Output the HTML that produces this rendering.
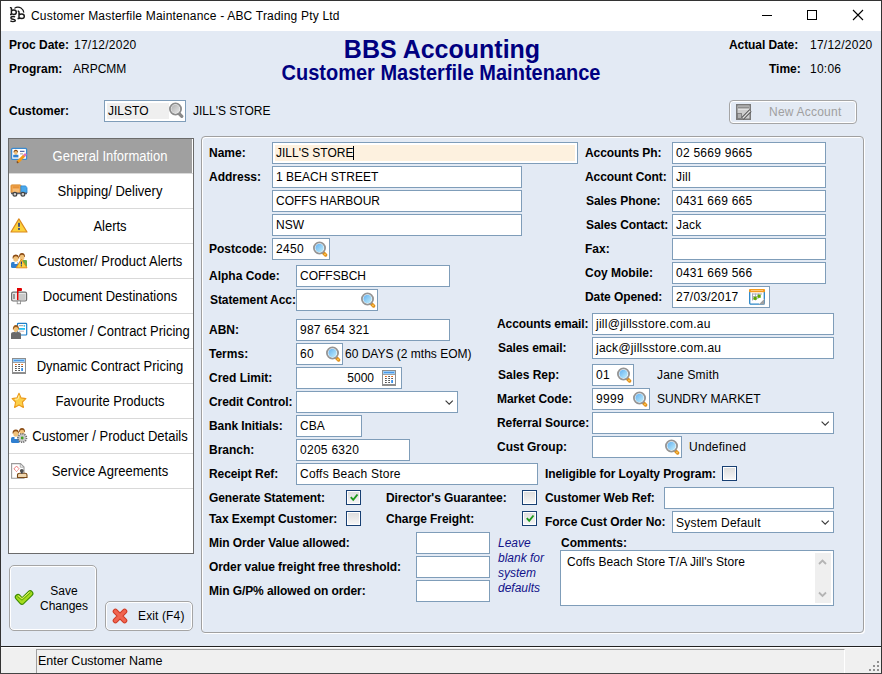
<!DOCTYPE html><html><head><meta charset="utf-8"><style>
html,body{margin:0;padding:0}
body{width:882px;height:674px;position:relative;overflow:hidden;background:#E3EAF4;font-family:"Liberation Sans", sans-serif;color:#000}
.a{position:absolute}
svg{display:block}
.t{position:absolute;white-space:nowrap}
.inp{position:absolute;box-sizing:border-box;border:1px solid #7F9DB9}
.cb{position:absolute;box-sizing:border-box;width:15px;height:15px;border:1px solid #173f72;background:linear-gradient(#dcdcdc,#f7f7f7);box-shadow:inset 0 0 0 1px #fff}
.side{position:absolute;left:9px;width:184px;height:34px;border-bottom:1px solid #d9d9d9}
</style></head><body>
<div class="a" style="left:0px;top:0px;width:882px;height:31px;background:#fff"></div>
<div class="a" style="left:0px;top:0px;width:882px;height:1px;background:#333"></div>
<div class="a" style="left:0px;top:0px;width:1px;height:674px;background:#333"></div>
<div class="a" style="left:881px;top:0px;width:1px;height:674px;background:#333"></div>
<div class="a" style="left:0px;top:0px;width:30px;height:30px"><svg width="30" height="30" viewBox="0 0 30 30" fill="none" stroke="#1a1a1a" stroke-width="1.45"><path d="M11.4 7.6 V14.5 M9.9 7.6 H11.4 M10 14.5 H11.8 M11.4 11 Q12.3 10 14 10 Q16.3 10 16.3 12.3 Q16.3 14.5 14 14.5 Q12.3 14.5 11.4 13.6"/><path d="M15.1 17 Q14.4 16.5 13 16.5 Q10.9 16.5 10.9 17.9 Q10.9 19 13 19.2 Q15.3 19.5 15.3 20.6 Q15.3 21.6 13 21.6 Q11.2 21.6 10.4 20.8"/><path d="M19 11.2 V18.5 M17.7 11.2 H19 M17.5 18.5 H19.3 M19 15 Q20 13.9 21.8 13.9 Q24.3 13.9 24.3 16.2 Q24.3 18.5 21.8 18.5 Q20 18.5 19 17.6"/><path d="M14.4 8.4 Q17.5 6 21 8 Q23.2 9.6 23.9 12.6" stroke-width="1.1"/></svg></div>
<div class="t" style="left:31px;top:10px;font-size:12px;line-height:12px;letter-spacing:0.2px;">Customer Masterfile Maintenance - ABC Trading Pty Ltd</div>
<div class="a" style="left:762px;top:15px;width:10px;height:1px;background:#000"></div>
<div class="a" style="left:807px;top:10px;width:10px;height:10px;box-sizing:border-box;border:1px solid #000"></div>
<div class="a" style="left:852px;top:9px;width:12px;height:12px"><svg width="12" height="12" viewBox="0 0 12 12"><path d="M1 1 L11 11 M11 1 L1 11" stroke="#000" stroke-width="1.1"/></svg></div>
<div class="t" style="left:9px;top:39px;font-size:12px;line-height:12px;font-weight:bold;">Proc Date:</div>
<div class="t" style="left:74px;top:39px;font-size:12px;line-height:12px;letter-spacing:0.24px;">17/12/2020</div>
<div class="t" style="left:9px;top:63px;font-size:12px;line-height:12px;font-weight:bold;">Program:</div>
<div class="t" style="left:73px;top:63px;font-size:12px;line-height:12px;">ARPCMM</div>
<div class="t" style="left:142px;width:600px;text-align:center;top:37px;font-size:25px;line-height:25px;font-weight:bold;color:#000080;">BBS Accounting</div>
<div class="t" style="left:141px;width:600px;text-align:center;top:62px;font-size:20px;line-height:20px;font-weight:bold;color:#000080;transform:scaleY(1.065);transform-origin:0 3px;">Customer Masterfile Maintenance</div>
<div class="t" style="left:729px;top:39px;font-size:12px;line-height:12px;font-weight:bold;letter-spacing:-0.08px;">Actual Date:</div>
<div class="t" style="left:810px;top:39px;font-size:12px;line-height:12px;letter-spacing:0.24px;">17/12/2020</div>
<div class="t" style="left:769px;top:63px;font-size:12px;line-height:12px;font-weight:bold;">Time:</div>
<div class="t" style="left:810px;top:63px;font-size:12px;line-height:12px;letter-spacing:0.24px;">10:06</div>
<div class="t" style="left:9px;top:105px;font-size:12px;line-height:12px;font-weight:bold;">Customer:</div>
<div class="inp" style="left:104px;top:100px;width:82px;height:22px;background:#fff"></div>
<div class="a" style="left:107px;top:103px;width:62px;height:16px;background:#efefef"></div>
<div class="a" style="left:168px;top:102px;width:16px;height:16px"><svg width="16" height="16" viewBox="0 0 16 16"><defs><linearGradient id="mgg" x1="0" y1="0" x2="1" y2="1"><stop offset="0" stop-color="#b0b0b0"/><stop offset="1" stop-color="#e8e8e8"/></linearGradient></defs><path d="M11 11.5 L13.8 14.3" stroke="#8a8a8a" stroke-width="3.2" stroke-linecap="round"/><circle cx="7.5" cy="7" r="5.6" fill="#fff" stroke="#8c8c8c" stroke-width="1.8"/><circle cx="7.5" cy="7" r="4.3" fill="url(#mgg)"/></svg></div>
<div class="t" style="left:108px;top:105px;font-size:12px;line-height:12px;">JILSTO</div>
<div class="t" style="left:193px;top:105px;font-size:12px;line-height:12px;">JILL'S STORE</div>
<div class="a" style="left:729px;top:100px;width:128px;height:24px;box-sizing:border-box;border:1px solid #a5a5a5;border-radius:4px;box-shadow:inset 0 0 0 1px #fff"></div>
<div class="a" style="left:736px;top:104px;width:16px;height:16px"><svg width="16" height="16" viewBox="0 0 16 16"><rect x="0.75" y="0.75" width="13.5" height="14.5" fill="#cdcdcd" stroke="#7a7a7a" stroke-width="1.5"/><rect x="2" y="2.5" width="11" height="1.8" fill="#8e8e8e"/><rect x="2" y="5" width="11" height="0.8" fill="#e6e6e6"/><rect x="1.5" y="9.5" width="4" height="5" fill="#b0b0b0" stroke="#777" stroke-width="0.8"/><path d="M6.5 14.5 L14.5 6.5" stroke="#555" stroke-width="3.2"/><path d="M6.8 14.2 L14.2 6.8" stroke="#e0e0e0" stroke-width="1.3"/></svg></div>
<div class="t" style="left:769px;top:106px;font-size:12px;line-height:12px;color:#a0a0a0;letter-spacing:0.22px;">New Account</div>
<div class="a" style="left:8px;top:138px;width:186px;height:416px;box-sizing:border-box;border:1px solid #6b6b6b;background:#fff"></div>
<div class="a" style="left:9px;top:139px;width:183px;height:34px;background:#a0a0a0"></div>
<div class="t" style="left:-190px;width:600px;text-align:center;top:150px;font-size:13px;line-height:13px;color:#ffffff;transform:scaleY(1.1);transform-origin:0 11px;">General Information</div>
<div class="a" style="left:9px;top:173px;width:184px;height:1px;background:#d9d9d9"></div>
<div class="t" style="left:-190px;width:600px;text-align:center;top:185px;font-size:13px;line-height:13px;transform:scaleY(1.1);transform-origin:0 11px;">Shipping/ Delivery</div>
<div class="a" style="left:9px;top:208px;width:184px;height:1px;background:#d9d9d9"></div>
<div class="t" style="left:-190px;width:600px;text-align:center;top:220px;font-size:13px;line-height:13px;transform:scaleY(1.1);transform-origin:0 11px;">Alerts</div>
<div class="a" style="left:9px;top:243px;width:184px;height:1px;background:#d9d9d9"></div>
<div class="t" style="left:-190px;width:600px;text-align:center;top:255px;font-size:13px;line-height:13px;transform:scaleY(1.1);transform-origin:0 11px;">Customer/ Product Alerts</div>
<div class="a" style="left:9px;top:278px;width:184px;height:1px;background:#d9d9d9"></div>
<div class="t" style="left:-190px;width:600px;text-align:center;top:290px;font-size:13px;line-height:13px;transform:scaleY(1.1);transform-origin:0 11px;">Document Destinations</div>
<div class="a" style="left:9px;top:313px;width:184px;height:1px;background:#d9d9d9"></div>
<div class="t" style="left:-190px;width:600px;text-align:center;top:325px;font-size:13px;line-height:13px;transform:scaleY(1.1);transform-origin:0 11px;">Customer / Contract Pricing</div>
<div class="a" style="left:9px;top:348px;width:184px;height:1px;background:#d9d9d9"></div>
<div class="t" style="left:-190px;width:600px;text-align:center;top:360px;font-size:13px;line-height:13px;transform:scaleY(1.1);transform-origin:0 11px;">Dynamic Contract Pricing</div>
<div class="a" style="left:9px;top:383px;width:184px;height:1px;background:#d9d9d9"></div>
<div class="t" style="left:-190px;width:600px;text-align:center;top:395px;font-size:13px;line-height:13px;transform:scaleY(1.1);transform-origin:0 11px;">Favourite Products</div>
<div class="a" style="left:9px;top:418px;width:184px;height:1px;background:#d9d9d9"></div>
<div class="t" style="left:-190px;width:600px;text-align:center;top:430px;font-size:13px;line-height:13px;transform:scaleY(1.1);transform-origin:0 11px;">Customer / Product Details</div>
<div class="a" style="left:9px;top:453px;width:184px;height:1px;background:#d9d9d9"></div>
<div class="t" style="left:-190px;width:600px;text-align:center;top:465px;font-size:13px;line-height:13px;transform:scaleY(1.1);transform-origin:0 11px;">Service Agreements</div>
<div class="a" style="left:9px;top:488px;width:184px;height:1px;background:#d9d9d9"></div>
<div class="a" style="left:9px;top:145px;width:22px;height:22px"><svg width="22" height="22" viewBox="0 0 22 22"><rect x="2.6" y="3.4" width="15" height="11" rx="1" fill="#fff" stroke="#3a8ad0" stroke-width="1.3"/><path d="M4.5 7.5 Q4.5 4.8 6.8 4.8 Q9 4.8 9 7.5 Z" fill="#8a4a12"/><ellipse cx="6.8" cy="8" rx="1.7" ry="2" fill="#f1c27a"/><rect x="4.2" y="9.8" width="5.2" height="2.6" fill="#2f7fd0"/><rect x="11" y="5.8" width="4.5" height="1" fill="#2a4a9a"/><rect x="11" y="8.5" width="3" height="0.8" fill="#888"/><path d="M8.8 17 L15.3 10.5" stroke="#f29a1a" stroke-width="3"/><path d="M15 10.8 L17 8.8" stroke="#e070c0" stroke-width="2.6"/><path d="M8 17.8 L9 16.8" stroke="#7a4a20" stroke-width="2"/></svg></div>
<div class="a" style="left:9px;top:180px;width:22px;height:22px"><svg width="22" height="22" viewBox="0 0 22 22"><rect x="2" y="4.9" width="9.9" height="8.2" rx="0.8" fill="#f2a650" stroke="#d68420" stroke-width="0.9"/><rect x="3.8" y="6.5" width="6.4" height="1.2" fill="#e08a30"/><rect x="3.8" y="8.8" width="6.4" height="3.5" fill="#f6bb74"/><path d="M11.9 5.9 H16.6 L18 7.8 V13 H11.9 Z" fill="#48a8ec" stroke="#2a86d0" stroke-width="0.8"/><rect x="2" y="12.6" width="16" height="1.6" fill="#5a6070"/><circle cx="5.9" cy="14.2" r="1.9" fill="#d0d0d0" stroke="#444" stroke-width="1.2"/><circle cx="13.9" cy="14.2" r="1.9" fill="#d0d0d0" stroke="#444" stroke-width="1.2"/></svg></div>
<div class="a" style="left:9px;top:215px;width:22px;height:22px"><svg width="22" height="22" viewBox="0 0 22 22"><path d="M9.9 3.9 L18 17 H2 Z" fill="#fcd23c" stroke="#dc8a1c" stroke-width="1.2" stroke-linejoin="round"/><rect x="9.2" y="7.8" width="1.6" height="4" fill="#1f3a8a"/><rect x="9.2" y="13" width="1.6" height="1.9" fill="#1f3a8a"/></svg></div>
<div class="a" style="left:9px;top:250px;width:22px;height:22px"><svg width="22" height="22" viewBox="0 0 22 22"><path d="M10 7 Q10 3 13 3 Q16 3 16 7 Z" fill="#8a4a12"/><ellipse cx="13" cy="7.5" rx="2.4" ry="2.7" fill="#f1c27a"/><rect x="13.5" y="10" width="4.5" height="7" rx="1" fill="#6ab04a"/><path d="M3.5 8.5 Q3.5 4.5 6.8 4.5 Q10 4.5 10 8.5 Z" fill="#8a4a12"/><ellipse cx="6.8" cy="9" rx="2.5" ry="2.8" fill="#f1c27a"/><rect x="2" y="12" width="7.5" height="6" rx="1.5" fill="#2f7fd0"/><rect x="5.5" y="12" width="3" height="2" fill="#fff"/><path d="M12.4 9.2 L18 17.8 H7.2 Z" fill="#fcd23c" stroke="#e08a1c" stroke-width="1" stroke-linejoin="round"/><rect x="11.8" y="11.5" width="1.2" height="3" fill="#1f3a8a"/><rect x="11.8" y="15.2" width="1.2" height="1.2" fill="#1f3a8a"/></svg></div>
<div class="a" style="left:9px;top:285px;width:22px;height:22px"><svg width="22" height="22" viewBox="0 0 22 22"><rect x="2.6" y="7.2" width="15" height="8.8" rx="1.5" fill="#e6e6e6" stroke="#707070" stroke-width="1.2"/><rect x="4" y="9" width="2" height="5" fill="#9a9a9a"/><rect x="10" y="9" width="6.5" height="6" fill="#c8c8c8"/><rect x="8.2" y="16" width="3.4" height="2.8" fill="#fff" stroke="#888" stroke-width="0.8"/><rect x="8" y="3" width="1.5" height="12" fill="#e00000"/><rect x="8" y="3" width="5" height="3" rx="1" fill="#e00000"/></svg></div>
<div class="a" style="left:9px;top:320px;width:22px;height:22px"><svg width="22" height="22" viewBox="0 0 22 22"><rect x="8.5" y="3.4" width="9.2" height="11.6" rx="0.8" fill="#fff" stroke="#1f7fc8" stroke-width="1.2"/><rect x="10" y="5.2" width="4" height="1" fill="#999"/><circle cx="15.3" cy="5.8" r="0.9" fill="#20b8f0"/><rect x="10" y="8" width="6" height="1.8" fill="#20c0f0"/><rect x="10" y="10.8" width="5" height="0.7" fill="#c0a0a0"/><path d="M3.8 9.5 Q3.8 5 7 5 Q10 5 10 9.5 Z" fill="#9a5a18"/><ellipse cx="7" cy="9.5" rx="2.3" ry="2.6" fill="#f1c27a"/><path d="M2 19 V14 Q2 12 5 12 H9 Q12 12 12 14 V19 Z" fill="#6a6a6a"/><path d="M6 12 L7 15 L8 12 Z" fill="#fff"/><rect x="6.5" y="12" width="1" height="2.5" fill="#222"/></svg></div>
<div class="a" style="left:9px;top:355px;width:22px;height:22px"><svg width="22" height="22" viewBox="0 0 22 22"><rect x="3.5" y="3.5" width="13" height="15" fill="#fff" stroke="#8e8e8e" stroke-width="1"/><rect x="3" y="17" width="14" height="2" fill="#8e8e8e"/><rect x="4" y="4" width="12" height="3.2" fill="#98ccf8"/><rect x="5" y="5.2" width="10" height="0.8" fill="#3a8ae0"/><rect x="3.5" y="7.2" width="13" height="0.8" fill="#8e8e8e"/><g fill="#555"><rect x="9.2" y="9" width="1.8" height="1"/><rect x="6" y="11" width="1.8" height="1"/><rect x="9.2" y="11" width="1.8" height="1"/><rect x="12.2" y="11" width="1.8" height="1"/><rect x="6" y="13" width="1.8" height="1"/><rect x="9.2" y="13" width="1.8" height="1"/><rect x="6" y="15" width="1.8" height="1"/><rect x="9.2" y="15" width="1.8" height="1"/></g><rect x="6" y="9" width="1.8" height="1" fill="#f06a10"/><rect x="12.2" y="9" width="1.8" height="1" fill="#f06a10"/><rect x="12.2" y="13" width="1.8" height="3" fill="#3a90e8"/></svg></div>
<div class="a" style="left:9px;top:390px;width:22px;height:22px"><svg width="22" height="22" viewBox="0 0 22 22"><path d="M10 3.3 L12.1 7.9 L16.9 8.6 L13.4 12 L14.4 17.4 L10 14.9 L5.6 17.4 L6.6 12 L3.1 8.6 L7.9 7.9 Z" fill="#fcd04a" stroke="#eb9a1a" stroke-width="1.1" stroke-linejoin="round"/><path d="M6 9.3 L9 9 L10 5.5" fill="none" stroke="#fff6c0" stroke-width="0.8"/></svg></div>
<div class="a" style="left:9px;top:425px;width:22px;height:22px"><svg width="22" height="22" viewBox="0 0 22 22"><path d="M10 7 Q10 3 13 3 Q16 3 16 7 Z" fill="#8a4a12"/><ellipse cx="13" cy="7.5" rx="2.4" ry="2.7" fill="#f1c27a"/><path d="M3.5 8.5 Q3.5 4.5 6.8 4.5 Q10 4.5 10 8.5 Z" fill="#8a4a12"/><ellipse cx="6.8" cy="9" rx="2.5" ry="2.8" fill="#f1c27a"/><rect x="2" y="12" width="8.5" height="6" rx="1.5" fill="#2f7fd0"/><rect x="5.5" y="12" width="3" height="2" fill="#fff"/><circle cx="13.2" cy="13" r="4.3" fill="#c8c8c8" stroke="#707070" stroke-width="1.6" stroke-dasharray="1.2 1"/><circle cx="13.2" cy="13" r="1.4" fill="#40a020"/></svg></div>
<div class="a" style="left:9px;top:460px;width:22px;height:22px"><svg width="22" height="22" viewBox="0 0 22 22"><path d="M2.6 3.6 H11.5 L15 7 V18.2 H2.6 Z" fill="#fff" stroke="#9a9a9a" stroke-width="1.1"/><path d="M11.3 3.8 V7.2 H14.8" fill="none" stroke="#9a9a9a" stroke-width="0.8"/><path d="M7.5 6 L10 8.8 L7.5 11.6 L5 8.8 Z" fill="none" stroke="#e02020" stroke-width="0.9" stroke-dasharray="0.9 0.7"/><path d="M8.5 17.5 V15 Q8.5 13.2 11 13.2 H16 Q18 13.2 18 15 V17.5 Z" fill="#f0d8b0" stroke="#7a4a18" stroke-width="1.1"/><rect x="12" y="10.5" width="1.6" height="3" fill="#2a3a5a"/><circle cx="12.8" cy="10.8" r="1.9" fill="#505050"/></svg></div>
<div class="a" style="left:9px;top:565px;width:88px;height:66px;box-sizing:border-box;border:1px solid #a5a5a5;border-radius:5px;box-shadow:inset 0 0 0 1px #fff"></div>
<div class="a" style="left:12px;top:586px;width:24px;height:24px"><svg width="24" height="24" viewBox="0 0 24 24"><path d="M6 11.2 L10 15.6 L18.2 7.4" fill="none" stroke="#3d8c00" stroke-width="6.4" stroke-linejoin="round" stroke-linecap="round"/><path d="M6 11.2 L10 15.6 L18.2 7.4" fill="none" stroke="#a6dc1e" stroke-width="4.2" stroke-linejoin="round" stroke-linecap="round"/><path d="M5.2 10.6 L10 14.2 L18.6 6.6" fill="none" stroke="#4a9a00" stroke-width="0.8"/><path d="M6.5 9.6 L10 12.6 L17.5 5.8" fill="none" stroke="#e8f47a" stroke-width="0.9"/></svg></div>
<div class="t" style="left:-236px;width:600px;text-align:center;top:585px;font-size:12px;line-height:12px;">Save</div>
<div class="t" style="left:-236px;width:600px;text-align:center;top:600px;font-size:12px;line-height:12px;">Changes</div>
<div class="a" style="left:105px;top:601px;width:88px;height:30px;box-sizing:border-box;border:1px solid #a5a5a5;border-radius:5px;box-shadow:inset 0 0 0 1px #fff"></div>
<div class="a" style="left:108px;top:604px;width:24px;height:24px"><svg width="24" height="24" viewBox="0 0 24 24"><path d="M7.4 7.4 L16.6 16.6 M16.6 7.4 L7.4 16.6" stroke="#cf3b25" stroke-width="5.4" stroke-linecap="round"/><path d="M7.4 7.4 L16.6 16.6 M16.6 7.4 L7.4 16.6" stroke="#f06450" stroke-width="3.4" stroke-linecap="round"/></svg></div>
<div class="t" style="left:138px;top:610px;font-size:12px;line-height:12px;letter-spacing:0.13px;">Exit (F4)</div>
<div class="a" style="left:201px;top:136px;width:663px;height:497px;box-sizing:border-box;border:1px solid #a0a0a0;border-radius:4px;box-shadow:inset 1px 1px 0 #fff, 1px 1px 0 #fff"></div>
<div class="t" style="left:209px;top:147px;font-size:12px;line-height:12px;font-weight:bold;">Name:</div>
<div class="inp" style="left:272px;top:142px;width:306px;height:22px;background:#fff"></div>
<div class="a" style="left:275px;top:145px;width:300px;height:16px;background:#fdf1df"></div>
<div class="t" style="left:276px;top:147px;font-size:12px;line-height:12px;">JILL'S STORE</div>
<div class="a" style="left:353px;top:146px;width:1px;height:14px;background:#000"></div>
<div class="t" style="left:209px;top:171px;font-size:12px;line-height:12px;font-weight:bold;">Address:</div>
<div class="inp" style="left:272px;top:166px;width:250px;height:22px;background:#fff"></div>
<div class="t" style="left:276px;top:171px;font-size:12px;line-height:12px;letter-spacing:0.02px;">1 BEACH STREET</div>
<div class="inp" style="left:272px;top:190px;width:250px;height:22px;background:#fff"></div>
<div class="t" style="left:276px;top:195px;font-size:12px;line-height:12px;">COFFS HARBOUR</div>
<div class="inp" style="left:272px;top:214px;width:250px;height:22px;background:#fff"></div>
<div class="t" style="left:276px;top:219px;font-size:12px;line-height:12px;">NSW</div>
<div class="t" style="left:209px;top:243px;font-size:12px;line-height:12px;font-weight:bold;">Postcode:</div>
<div class="inp" style="left:272px;top:238px;width:58px;height:22px;background:#fff"></div>
<div class="t" style="left:276px;top:243px;font-size:12px;line-height:12px;letter-spacing:0.3px;">2450</div>
<div class="a" style="left:312px;top:241px;width:16px;height:16px"><svg width="16" height="16" viewBox="0 0 16 16"><defs><linearGradient id="mg1" x1="0" y1="0" x2="1" y2="1"><stop offset="0" stop-color="#62b0f0"/><stop offset="1" stop-color="#c4f0fc"/></linearGradient></defs><path d="M11.6 12 L13.6 14" stroke="#e0901c" stroke-width="3.4" stroke-linecap="round"/><circle cx="13" cy="13.4" r="0.9" fill="#ffcc55"/><circle cx="7.5" cy="7" r="5.6" fill="#fff" stroke="#959595" stroke-width="1.8"/><circle cx="7.5" cy="7" r="4.2" fill="url(#mg1)"/></svg></div>
<div class="t" style="left:209px;top:270px;font-size:12px;line-height:12px;font-weight:bold;">Alpha Code:</div>
<div class="inp" style="left:296px;top:265px;width:154px;height:22px;background:#fff"></div>
<div class="t" style="left:300px;top:270px;font-size:12px;line-height:12px;">COFFSBCH</div>
<div class="t" style="left:210px;top:294px;font-size:12px;line-height:12px;font-weight:bold;letter-spacing:-0.08px;">Statement Acc:</div>
<div class="inp" style="left:296px;top:289px;width:82px;height:22px;background:#fff"></div>
<div class="a" style="left:360px;top:292px;width:16px;height:16px"><svg width="16" height="16" viewBox="0 0 16 16"><defs><linearGradient id="mg2" x1="0" y1="0" x2="1" y2="1"><stop offset="0" stop-color="#62b0f0"/><stop offset="1" stop-color="#c4f0fc"/></linearGradient></defs><path d="M11.6 12 L13.6 14" stroke="#e0901c" stroke-width="3.4" stroke-linecap="round"/><circle cx="13" cy="13.4" r="0.9" fill="#ffcc55"/><circle cx="7.5" cy="7" r="5.6" fill="#fff" stroke="#959595" stroke-width="1.8"/><circle cx="7.5" cy="7" r="4.2" fill="url(#mg2)"/></svg></div>
<div class="t" style="left:209px;top:324px;font-size:12px;line-height:12px;font-weight:bold;">ABN:</div>
<div class="inp" style="left:296px;top:319px;width:154px;height:22px;background:#fff"></div>
<div class="t" style="left:300px;top:324px;font-size:12px;line-height:12px;letter-spacing:0.25px;">987 654 321</div>
<div class="t" style="left:209px;top:348px;font-size:12px;line-height:12px;font-weight:bold;">Terms:</div>
<div class="inp" style="left:296px;top:343px;width:47px;height:22px;background:#fff"></div>
<div class="t" style="left:300px;top:348px;font-size:12px;line-height:12px;letter-spacing:0.3px;">60</div>
<div class="a" style="left:325px;top:346px;width:16px;height:16px"><svg width="16" height="16" viewBox="0 0 16 16"><defs><linearGradient id="mg3" x1="0" y1="0" x2="1" y2="1"><stop offset="0" stop-color="#62b0f0"/><stop offset="1" stop-color="#c4f0fc"/></linearGradient></defs><path d="M11.6 12 L13.6 14" stroke="#e0901c" stroke-width="3.4" stroke-linecap="round"/><circle cx="13" cy="13.4" r="0.9" fill="#ffcc55"/><circle cx="7.5" cy="7" r="5.6" fill="#fff" stroke="#959595" stroke-width="1.8"/><circle cx="7.5" cy="7" r="4.2" fill="url(#mg3)"/></svg></div>
<div class="t" style="left:345px;top:348px;font-size:12px;line-height:12px;">60 DAYS (2 mths EOM)</div>
<div class="t" style="left:209px;top:372px;font-size:12px;line-height:12px;font-weight:bold;">Cred Limit:</div>
<div class="inp" style="left:296px;top:367px;width:106px;height:22px;background:#fff"></div>
<div class="t" style="left:74px;width:300px;text-align:right;top:372px;font-size:12px;line-height:12px;">5000</div>
<div class="a" style="left:376px;top:366px;width:22px;height:22px"><svg width="22" height="22" viewBox="0 0 22 22"><rect x="6.5" y="4.5" width="13" height="15" fill="#fff" stroke="#8e8e8e" stroke-width="1"/><rect x="6" y="18" width="14" height="2" fill="#8e8e8e"/><rect x="7" y="5" width="12" height="3.2" fill="#98ccf8"/><rect x="8" y="6.2" width="10" height="0.8" fill="#3a8ae0"/><rect x="6.5" y="8.2" width="13" height="0.8" fill="#8e8e8e"/><g fill="#555"><rect x="12.2" y="10" width="1.8" height="1"/><rect x="9" y="12" width="1.8" height="1"/><rect x="12.2" y="12" width="1.8" height="1"/><rect x="15.2" y="12" width="1.8" height="1"/><rect x="9" y="14" width="1.8" height="1"/><rect x="12.2" y="14" width="1.8" height="1"/><rect x="9" y="16" width="1.8" height="1"/><rect x="12.2" y="16" width="1.8" height="1"/></g><rect x="9" y="10" width="1.8" height="1" fill="#f06a10"/><rect x="15.2" y="10" width="1.8" height="1" fill="#f06a10"/><rect x="15.2" y="14" width="1.8" height="3" fill="#3a90e8"/></svg></div>
<div class="t" style="left:209px;top:396px;font-size:12px;line-height:12px;font-weight:bold;letter-spacing:-0.08px;">Credit Control:</div>
<div class="inp" style="left:296px;top:391px;width:162px;height:22px;background:#fff"></div>
<div class="a" style="left:445px;top:400px;width:10px;height:6px"><svg width="10" height="6" viewBox="0 0 10 6"><path d="M0.6 0.6 L4.2 4.2 L7.8 0.6" fill="none" stroke="#3a3a3a" stroke-width="1.15"/></svg></div>
<div class="t" style="left:209px;top:420px;font-size:12px;line-height:12px;font-weight:bold;letter-spacing:-0.08px;">Bank Initials:</div>
<div class="inp" style="left:296px;top:415px;width:66px;height:22px;background:#fff"></div>
<div class="t" style="left:300px;top:420px;font-size:12px;line-height:12px;">CBA</div>
<div class="t" style="left:209px;top:444px;font-size:12px;line-height:12px;font-weight:bold;">Branch:</div>
<div class="inp" style="left:296px;top:439px;width:114px;height:22px;background:#fff"></div>
<div class="t" style="left:300px;top:444px;font-size:12px;line-height:12px;letter-spacing:0.27px;">0205 6320</div>
<div class="t" style="left:209px;top:468px;font-size:12px;line-height:12px;font-weight:bold;letter-spacing:-0.08px;">Receipt Ref:</div>
<div class="inp" style="left:296px;top:463px;width:242px;height:22px;background:#fff"></div>
<div class="t" style="left:300px;top:468px;font-size:12px;line-height:12px;letter-spacing:0.21px;">Coffs Beach Store</div>
<div class="t" style="left:209px;top:492px;font-size:12px;line-height:12px;font-weight:bold;letter-spacing:-0.08px;">Generate Statement:</div>
<div class="cb" style="left:346px;top:490px"></div>
<div class="a" style="left:349px;top:493px;width:10px;height:9px"><svg width="10" height="9" viewBox="0 0 10 9"><path d="M1.8 4.2 L4.2 6.8 L8.5 1.5" fill="none" stroke="#1d9a1d" stroke-width="1.9"/></svg></div>
<div class="t" style="left:209px;top:513px;font-size:12px;line-height:12px;font-weight:bold;letter-spacing:-0.08px;">Tax Exempt Customer:</div>
<div class="cb" style="left:346px;top:511px"></div>
<div class="t" style="left:386px;top:492px;font-size:12px;line-height:12px;font-weight:bold;letter-spacing:-0.08px;">Director's Guarantee:</div>
<div class="cb" style="left:522px;top:490px"></div>
<div class="t" style="left:386px;top:513px;font-size:12px;line-height:12px;font-weight:bold;letter-spacing:-0.08px;">Charge Freight:</div>
<div class="cb" style="left:522px;top:511px"></div>
<div class="a" style="left:525px;top:514px;width:10px;height:9px"><svg width="10" height="9" viewBox="0 0 10 9"><path d="M1.8 4.2 L4.2 6.8 L8.5 1.5" fill="none" stroke="#1d9a1d" stroke-width="1.9"/></svg></div>
<div class="t" style="left:209px;top:537px;font-size:12px;line-height:12px;font-weight:bold;letter-spacing:-0.08px;">Min Order Value allowed:</div>
<div class="t" style="left:209px;top:561px;font-size:12px;line-height:12px;font-weight:bold;letter-spacing:-0.08px;">Order value freight free threshold:</div>
<div class="t" style="left:209px;top:585px;font-size:12px;line-height:12px;font-weight:bold;letter-spacing:-0.08px;">Min G/P% allowed on order:</div>
<div class="inp" style="left:416px;top:532px;width:74px;height:22px;background:#fff"></div>
<div class="inp" style="left:416px;top:556px;width:74px;height:22px;background:#fff"></div>
<div class="inp" style="left:416px;top:580px;width:74px;height:22px;background:#fff"></div>
<div class="t" style="left:498px;top:537px;font-size:12px;line-height:12px;font-style:italic;color:#12128a;">Leave</div>
<div class="t" style="left:498px;top:552px;font-size:12px;line-height:12px;font-style:italic;color:#12128a;">blank for</div>
<div class="t" style="left:498px;top:567px;font-size:12px;line-height:12px;font-style:italic;color:#12128a;">system</div>
<div class="t" style="left:498px;top:582px;font-size:12px;line-height:12px;font-style:italic;color:#12128a;">defaults</div>
<div class="t" style="left:585px;top:147px;font-size:12px;line-height:12px;font-weight:bold;letter-spacing:-0.08px;">Accounts Ph:</div>
<div class="inp" style="left:672px;top:142px;width:154px;height:22px;background:#fff"></div>
<div class="t" style="left:676px;top:147px;font-size:12px;line-height:12px;letter-spacing:0.25px;">02 5669 9665</div>
<div class="t" style="left:585px;top:171px;font-size:12px;line-height:12px;font-weight:bold;letter-spacing:-0.08px;">Account Cont:</div>
<div class="inp" style="left:672px;top:166px;width:154px;height:22px;background:#fff"></div>
<div class="t" style="left:676px;top:171px;font-size:12px;line-height:12px;letter-spacing:0.22px;">Jill</div>
<div class="t" style="left:586px;top:195px;font-size:12px;line-height:12px;font-weight:bold;letter-spacing:-0.08px;">Sales Phone:</div>
<div class="inp" style="left:672px;top:190px;width:154px;height:22px;background:#fff"></div>
<div class="t" style="left:676px;top:195px;font-size:12px;line-height:12px;letter-spacing:0.25px;">0431 669 665</div>
<div class="t" style="left:586px;top:219px;font-size:12px;line-height:12px;font-weight:bold;letter-spacing:-0.08px;">Sales Contact:</div>
<div class="inp" style="left:672px;top:214px;width:154px;height:22px;background:#fff"></div>
<div class="t" style="left:676px;top:219px;font-size:12px;line-height:12px;letter-spacing:0.22px;">Jack</div>
<div class="t" style="left:585px;top:243px;font-size:12px;line-height:12px;font-weight:bold;">Fax:</div>
<div class="inp" style="left:672px;top:238px;width:154px;height:22px;background:#fff"></div>
<div class="t" style="left:585px;top:267px;font-size:12px;line-height:12px;font-weight:bold;">Coy Mobile:</div>
<div class="inp" style="left:672px;top:262px;width:154px;height:22px;background:#fff"></div>
<div class="t" style="left:676px;top:267px;font-size:12px;line-height:12px;letter-spacing:0.25px;">0431 669 566</div>
<div class="t" style="left:585px;top:291px;font-size:12px;line-height:12px;font-weight:bold;letter-spacing:-0.08px;">Date Opened:</div>
<div class="inp" style="left:672px;top:286px;width:98px;height:22px;background:#fff"></div>
<div class="t" style="left:676px;top:291px;font-size:12px;line-height:12px;letter-spacing:0.24px;">27/03/2017</div>
<div class="a" style="left:749px;top:289px;width:16px;height:16px"><svg width="16" height="16" viewBox="0 0 16 16"><rect x="0.7" y="1" width="14.6" height="14.2" rx="1.2" fill="#fff" stroke="#2a86c8" stroke-width="1.3"/><rect x="0" y="0" width="16" height="3.2" rx="1" fill="#f39a1e"/><rect x="2" y="1.3" width="12" height="0.7" fill="#ffd9a0"/><g fill="#a8a8b8"><rect x="3" y="4.5" width="10" height="1"/><rect x="3" y="4.5" width="1" height="7"/><rect x="3" y="7" width="8" height="0.8"/><rect x="3" y="9" width="6" height="0.8"/><rect x="6" y="4.5" width="0.8" height="7"/><rect x="9" y="4.5" width="0.8" height="5"/></g><rect x="4.5" y="7.7" width="3.2" height="3.2" fill="#5aa800"/><rect x="8.5" y="5.6" width="3.2" height="3.2" fill="#5aa800"/><path d="M9.5 15.5 L15.5 9.5 V15.5 Z" fill="#a0a0a0"/><path d="M10 15 L15 10" stroke="#e8e8e8" stroke-width="0.8"/></svg></div>
<div class="t" style="left:497px;top:318px;font-size:12px;line-height:12px;font-weight:bold;letter-spacing:-0.08px;">Accounts email:</div>
<div class="inp" style="left:592px;top:313px;width:242px;height:22px;background:#fff"></div>
<div class="t" style="left:596px;top:318px;font-size:12px;line-height:12px;letter-spacing:0.26px;">jill@jillsstore.com.au</div>
<div class="t" style="left:498px;top:342px;font-size:12px;line-height:12px;font-weight:bold;letter-spacing:-0.08px;">Sales email:</div>
<div class="inp" style="left:592px;top:337px;width:242px;height:22px;background:#fff"></div>
<div class="t" style="left:596px;top:342px;font-size:12px;line-height:12px;letter-spacing:0.26px;">jack@jillsstore.com.au</div>
<div class="t" style="left:498px;top:369px;font-size:12px;line-height:12px;font-weight:bold;">Sales Rep:</div>
<div class="inp" style="left:592px;top:364px;width:42px;height:22px;background:#fff"></div>
<div class="t" style="left:596px;top:369px;font-size:12px;line-height:12px;letter-spacing:0.3px;">01</div>
<div class="a" style="left:616px;top:367px;width:16px;height:16px"><svg width="16" height="16" viewBox="0 0 16 16"><defs><linearGradient id="mg4" x1="0" y1="0" x2="1" y2="1"><stop offset="0" stop-color="#62b0f0"/><stop offset="1" stop-color="#c4f0fc"/></linearGradient></defs><path d="M11.6 12 L13.6 14" stroke="#e0901c" stroke-width="3.4" stroke-linecap="round"/><circle cx="13" cy="13.4" r="0.9" fill="#ffcc55"/><circle cx="7.5" cy="7" r="5.6" fill="#fff" stroke="#959595" stroke-width="1.8"/><circle cx="7.5" cy="7" r="4.2" fill="url(#mg4)"/></svg></div>
<div class="t" style="left:657px;top:369px;font-size:12px;line-height:12px;letter-spacing:0.21px;">Jane Smith</div>
<div class="t" style="left:497px;top:393px;font-size:12px;line-height:12px;font-weight:bold;letter-spacing:-0.08px;">Market Code:</div>
<div class="inp" style="left:592px;top:388px;width:58px;height:22px;background:#fff"></div>
<div class="t" style="left:596px;top:393px;font-size:12px;line-height:12px;letter-spacing:0.3px;">9999</div>
<div class="a" style="left:632px;top:391px;width:16px;height:16px"><svg width="16" height="16" viewBox="0 0 16 16"><defs><linearGradient id="mg5" x1="0" y1="0" x2="1" y2="1"><stop offset="0" stop-color="#62b0f0"/><stop offset="1" stop-color="#c4f0fc"/></linearGradient></defs><path d="M11.6 12 L13.6 14" stroke="#e0901c" stroke-width="3.4" stroke-linecap="round"/><circle cx="13" cy="13.4" r="0.9" fill="#ffcc55"/><circle cx="7.5" cy="7" r="5.6" fill="#fff" stroke="#959595" stroke-width="1.8"/><circle cx="7.5" cy="7" r="4.2" fill="url(#mg5)"/></svg></div>
<div class="t" style="left:657px;top:393px;font-size:12px;line-height:12px;">SUNDRY MARKET</div>
<div class="t" style="left:497px;top:417px;font-size:12px;line-height:12px;font-weight:bold;letter-spacing:-0.08px;">Referral Source:</div>
<div class="inp" style="left:592px;top:412px;width:242px;height:22px;background:#fff"></div>
<div class="a" style="left:821px;top:421px;width:10px;height:6px"><svg width="10" height="6" viewBox="0 0 10 6"><path d="M0.6 0.6 L4.2 4.2 L7.8 0.6" fill="none" stroke="#3a3a3a" stroke-width="1.15"/></svg></div>
<div class="t" style="left:497px;top:441px;font-size:12px;line-height:12px;font-weight:bold;">Cust Group:</div>
<div class="inp" style="left:592px;top:436px;width:90px;height:22px;background:#fff"></div>
<div class="a" style="left:664px;top:439px;width:16px;height:16px"><svg width="16" height="16" viewBox="0 0 16 16"><defs><linearGradient id="mg6" x1="0" y1="0" x2="1" y2="1"><stop offset="0" stop-color="#62b0f0"/><stop offset="1" stop-color="#c4f0fc"/></linearGradient></defs><path d="M11.6 12 L13.6 14" stroke="#e0901c" stroke-width="3.4" stroke-linecap="round"/><circle cx="13" cy="13.4" r="0.9" fill="#ffcc55"/><circle cx="7.5" cy="7" r="5.6" fill="#fff" stroke="#959595" stroke-width="1.8"/><circle cx="7.5" cy="7" r="4.2" fill="url(#mg6)"/></svg></div>
<div class="t" style="left:689px;top:441px;font-size:12px;line-height:12px;letter-spacing:0.27px;">Undefined</div>
<div class="t" style="left:545px;top:468px;font-size:12px;line-height:12px;font-weight:bold;letter-spacing:-0.08px;">Ineligible for Loyalty Program:</div>
<div class="cb" style="left:722px;top:466px"></div>
<div class="t" style="left:545px;top:492px;font-size:12px;line-height:12px;font-weight:bold;letter-spacing:-0.08px;">Customer Web Ref:</div>
<div class="inp" style="left:664px;top:487px;width:170px;height:22px;background:#fff"></div>
<div class="t" style="left:545px;top:516px;font-size:12px;line-height:12px;font-weight:bold;letter-spacing:-0.08px;">Force Cust Order No:</div>
<div class="inp" style="left:672px;top:511px;width:162px;height:22px;background:#fff"></div>
<div class="t" style="left:676px;top:517px;font-size:12px;line-height:12px;letter-spacing:0.24px;">System Default</div>
<div class="a" style="left:821px;top:520px;width:10px;height:6px"><svg width="10" height="6" viewBox="0 0 10 6"><path d="M0.6 0.6 L4.2 4.2 L7.8 0.6" fill="none" stroke="#3a3a3a" stroke-width="1.15"/></svg></div>
<div class="t" style="left:561px;top:537px;font-size:12px;line-height:12px;font-weight:bold;">Comments:</div>
<div class="inp" style="left:560px;top:550px;width:274px;height:56px;background:#fff"></div>
<div class="t" style="left:567px;top:556px;font-size:12px;line-height:12px;letter-spacing:0.06px;">Coffs Beach Store T/A Jill's Store</div>
<div class="a" style="left:815px;top:553px;width:16px;height:50px;background:#efefef"></div>
<div class="a" style="left:818px;top:559px;width:10px;height:7px"><svg width="10" height="7" viewBox="0 0 10 7"><path d="M1 5 L4.5 1.5 L8 5" fill="none" stroke="#b4b4b4" stroke-width="1.8"/></svg></div>
<div class="a" style="left:818px;top:591px;width:10px;height:7px"><svg width="10" height="7" viewBox="0 0 10 7"><path d="M1 1.5 L4.5 5 L8 1.5" fill="none" stroke="#b4b4b4" stroke-width="1.8"/></svg></div>
<div class="a" style="left:1px;top:646px;width:880px;height:1px;background:#222"></div>
<div class="a" style="left:1px;top:647px;width:880px;height:26px;background:#f0f0f0"></div>
<div class="a" style="left:1px;top:647px;width:880px;height:1px;background:#fff"></div>
<div class="a" style="left:36px;top:649px;width:809px;height:24px;box-sizing:border-box;border-top:1px solid #a0a0a0;border-left:1px solid #a0a0a0;border-right:1px solid #fff"></div>
<div class="t" style="left:38px;top:655px;font-size:12.5px;line-height:12px">Enter Customer Name</div>
<div class="a" style="left:877px;top:661px;width:2px;height:2px;background:#909090"></div>
<div class="a" style="left:873px;top:665px;width:2px;height:2px;background:#909090"></div>
<div class="a" style="left:877px;top:665px;width:2px;height:2px;background:#909090"></div>
<div class="a" style="left:869px;top:669px;width:2px;height:2px;background:#909090"></div>
<div class="a" style="left:873px;top:669px;width:2px;height:2px;background:#909090"></div>
<div class="a" style="left:877px;top:669px;width:2px;height:2px;background:#909090"></div>
<div class="a" style="left:0px;top:673px;width:882px;height:1px;background:#444"></div>
</body></html>
